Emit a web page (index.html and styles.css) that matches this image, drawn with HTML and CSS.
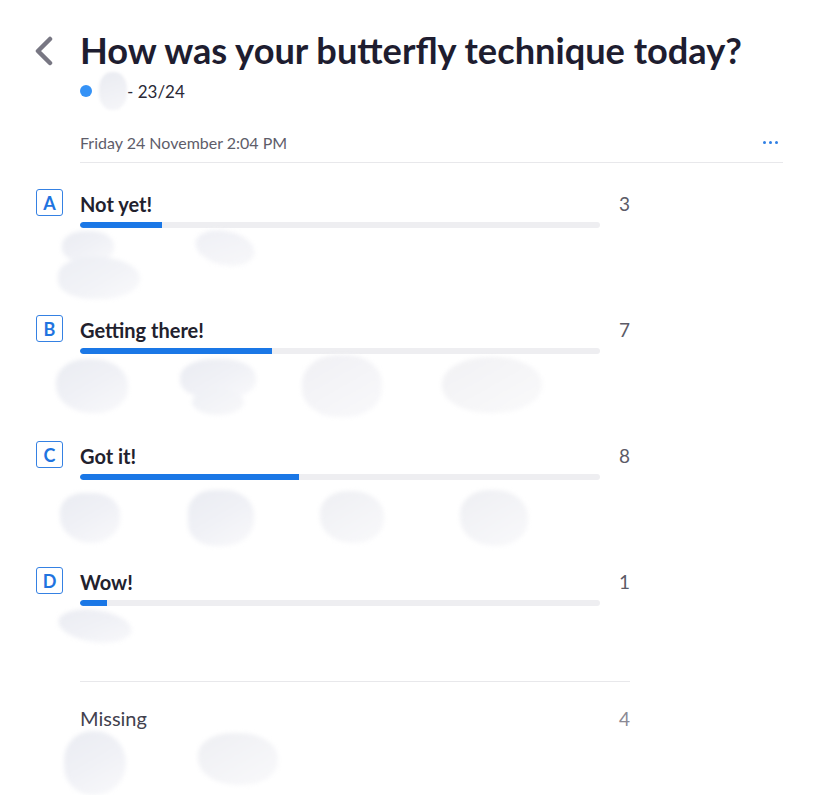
FILE: index.html
```html
<!DOCTYPE html>
<html lang="en">
<head>
<meta charset="utf-8">
<title>Poll results</title>
<link rel="stylesheet" href="styles.css">
</head>
<body>
<div class="page">
  <header class="header">
    <div class="title-row">
      <button class="back" aria-label="Back">
        <svg width="24" height="32" viewBox="0 0 24 32"><polyline points="16,3 4,15 16,27" fill="none" stroke="#787783" stroke-width="4.5" stroke-linecap="round" stroke-linejoin="round"/></svg>
      </button>
      <h1 class="title">How was your butterfly technique today?</h1>
    </div>
    <div class="sub">
      <span class="dot"></span>
      <span class="name-blob"></span>
      <span class="sub-text">- 23/24</span>
    </div>
    <div class="meta">
      <span class="date">Friday 24 November 2:04 PM</span>
      <span class="more" aria-label="More"><i></i><i></i><i></i></span>
    </div>
  </header>

  <section class="options">
    <div class="option">
      <span class="letter">A</span>
      <span class="label">Not yet!</span>
      <span class="count">3</span>
      <div class="bar"><div class="fill" style="width:15.79%"></div></div>
      <div class="avatars">
        <span class="blob a1"></span>
        <span class="blob a2"></span>
      </div>
    </div>
    <div class="option">
      <span class="letter">B</span>
      <span class="label">Getting there!</span>
      <span class="count">7</span>
      <div class="bar"><div class="fill" style="width:36.84%"></div></div>
      <div class="avatars">
        <span class="blob b1"></span>
        <span class="blob b2"></span>
        <span class="blob b3"></span>
        <span class="blob b4"></span>
      </div>
    </div>
    <div class="option">
      <span class="letter">C</span>
      <span class="label">Got it!</span>
      <span class="count">8</span>
      <div class="bar"><div class="fill" style="width:42.1%"></div></div>
      <div class="avatars">
        <span class="blob c1"></span>
        <span class="blob c2"></span>
        <span class="blob c3"></span>
        <span class="blob c4"></span>
      </div>
    </div>
    <div class="option">
      <span class="letter">D</span>
      <span class="label">Wow!</span>
      <span class="count">1</span>
      <div class="bar"><div class="fill" style="width:5.26%"></div></div>
      <div class="avatars">
        <span class="blob d1"></span>
      </div>
    </div>
  </section>

  <section class="missing">
    <div class="missing-head">
      <span class="missing-label">Missing</span>
      <span class="missing-count">4</span>
    </div>
    <div class="avatars missing-avatars">
      <span class="blob m1"></span>
      <span class="blob m2"></span>
    </div>
  </section>
</div>
</body>
</html>
```

FILE: styles.css
```css
* { box-sizing: border-box; }
html, body { margin: 0; padding: 0; background: #ffffff; }
body {
  font-family: Lato, "Noto Sans", "Liberation Sans", sans-serif;
  color: #22212d;
}
.page {
  width: 815px;
  padding: 29px 32px 0 36px;
}

/* header */
.header { padding-left: 44px; }
.title-row {
  display: flex;
  align-items: center;
  margin-left: -44px;
}
.back {
  width: 44px;
  height: 43px;
  padding: 0;
  border: 0;
  background: none;
  display: flex;
  align-items: center;
  justify-content: flex-start;
}
.back svg { display: block; margin-left: -2px; margin-top: 2px; }
.title {
  margin: 0;
  font-size: 36.2px;
  line-height: 43px;
  font-weight: 700;
  color: #1e1d30;
}
.sub {
  display: flex;
  align-items: center;
  height: 26px;
  margin-top: 6px;
}
.dot {
  width: 12px;
  height: 12px;
  border-radius: 50%;
  background: #3592f6;
}
.name-blob {
  width: 28px;
  height: 38px;
  margin: -12px 0 -12px 7px;
  border-radius: 45%;
  background: linear-gradient(160deg, #e9ebf1, #f6f6f9);
  filter: blur(1.5px);
}
.sub-text {
  font-size: 17px;
  color: #2a2936;
}
.meta {
  display: flex;
  align-items: center;
  justify-content: space-between;
  height: 59px;
  padding-top: 18px;
  border-bottom: 1px solid #e8e8eb;
}
.date {
  font-size: 16px;
  color: #5e5d6a;
}
.more {
  display: flex;
  gap: 3px;
  margin-right: 5px;
}
.more i {
  width: 3px;
  height: 3px;
  border-radius: 50%;
  background: #2f7fe4;
}

/* options */
.options {
  display: flex;
  flex-direction: column;
  gap: 12px;
  padding-top: 26px;
}
.option {
  display: grid;
  grid-template-columns: 44px 520px 30px;
  grid-template-rows: 27px auto auto;
  align-content: start;
  height: 114px;
}
.letter {
  width: 27px;
  height: 27px;
  border: 1.5px solid #3581e3;
  border-radius: 3px;
  color: #1f74e0;
  font-size: 18px;
  font-weight: 700;
  display: flex;
  align-items: center;
  justify-content: center;
}
.label {
  font-size: 20px;
  font-weight: 700;
  color: #22212d;
  align-self: center;
  margin-top: 2px;
}
.count {
  font-size: 19px;
  color: #5c5b67;
  text-align: right;
  align-self: center;
  margin-top: 2px;
}
.bar {
  grid-column: 2;
  height: 6px;
  margin-top: 6px;
  background: #eeeef1;
  border-radius: 3px;
  overflow: hidden;
}
.fill {
  height: 100%;
  background: #1a77e6;
  border-radius: 3px 0 0 3px;
}
.avatars {
  grid-column: 1 / 4;
  display: grid;
  grid-template-columns: repeat(4, 130px);
  padding-left: 20px;
  margin-top: 1px;
  align-items: start;
}
.blob {
  display: block;
  position: relative;
  background: linear-gradient(150deg, #eaecf2 0%, #f0f1f6 50%, #f9f9fb 100%);
  border-radius: 42% 48% 45% 50%;
  filter: blur(2px);
}
.a1 {
  width: 52px; height: 32px; margin-left: 6px; margin-top: 2px;
  border-radius: 45%;
}
.a1::after {
  content: "";
  position: absolute;
  left: -4px;
  top: 26px;
  width: 82px;
  height: 42px;
  border-radius: 45% 55% 50% 45%;
  background: linear-gradient(150deg, #eceef4 0%, #f2f3f7 55%, #fafafc 100%);
}
.a2 { width: 60px; height: 34px; margin-left: 9px; margin-top: 2px; border-radius: 50%; transform: rotate(12deg); background: linear-gradient(150deg, #eeeff5, #f8f8fa); }
.b1 { width: 72px; height: 54px; margin-top: 4px; }
.b2 { width: 76px; height: 40px; margin-top: 4px; margin-left: -6px; border-radius: 45%; }
.b2::after {
  content: "";
  position: absolute;
  left: 12px; top: 30px;
  width: 52px; height: 26px;
  border-radius: 50%;
  background: linear-gradient(150deg, #eef0f5, #f8f8fa);
}
.b3 { width: 80px; height: 62px; margin-top: 0; margin-left: -14px; border-radius: 45%; background: linear-gradient(150deg, #f0f0f4, #f9f9fb); }
.b4 { width: 100px; height: 56px; margin-top: 2px; margin-left: -4px; border-radius: 48%; background: linear-gradient(150deg, #f1f1f4, #fafafb); }
.c1 { width: 60px; height: 50px; margin-top: 12px; margin-left: 4px; border-radius: 40% 45% 50% 55%; }
.c2 { width: 66px; height: 56px; margin-top: 9px; margin-left: 2px; border-radius: 38% 44% 46% 40%; }
.c3 { width: 64px; height: 52px; margin-top: 10px; margin-left: 4px; background: linear-gradient(150deg, #eeeff3, #f9f9fb); }
.c4 { width: 68px; height: 56px; margin-top: 9px; margin-left: 14px; background: linear-gradient(150deg, #eeeff3, #f9f9fb); }
.d1 { width: 74px; height: 32px; margin-top: 3px; margin-left: 2px; border-radius: 50%; transform: rotate(8deg); }

/* missing */
.missing {
  width: 550px;
  margin-left: 44px;
  border-top: 1px solid #e8e8eb;
}
.missing-head {
  display: flex;
  justify-content: space-between;
  align-items: center;
  height: 26px;
  margin-top: 23px;
}
.missing-label {
  font-size: 20px;
  color: #42414e;
}
.missing-count {
  font-size: 19px;
  color: #8a8994;
}
.missing-avatars {
  padding-left: 0;
  margin-left: -20px;
  margin-top: 0;
}
.m1 { width: 62px; height: 64px; margin-left: 4px; border-radius: 45% 50% 50% 45%; }
.m2 { width: 80px; height: 52px; margin-left: 8px; margin-top: 2px; background: linear-gradient(150deg, #eeeff3, #f9f9fb); }
```
